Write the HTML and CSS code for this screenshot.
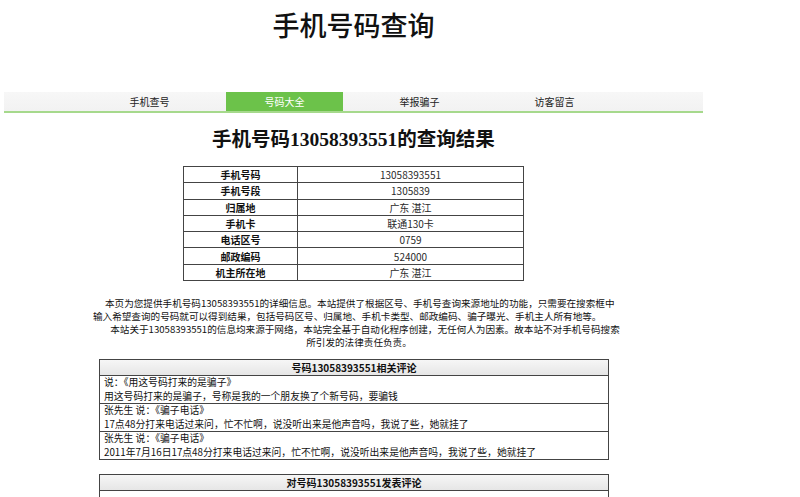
FILE: index.html
```html
<!DOCTYPE html>
<html lang="zh-CN">
<head>
<meta charset="utf-8">
<title>手机号码查询</title>
<link rel="stylesheet" href="styles.css">
</head>
<body>
<div class="page">
  <header class="site-head">
    <h1 class="site-title">手机号码查询</h1>
  </header>
  <nav class="nav">
    <a class="nav-item">手机查号</a>
    <a class="nav-item active">号码大全</a>
    <a class="nav-item">举报骗子</a>
    <a class="nav-item">访客留言</a>
  </nav>
  <h2 class="result-title">手机号码13058393551的查询结果</h2>
  <table class="info">
    <tr><th>手机号码</th><td>13058393551</td></tr>
    <tr><th>手机号段</th><td>1305839</td></tr>
    <tr><th>归属地</th><td>广东 湛江</td></tr>
    <tr><th>手机卡</th><td>联通130卡</td></tr>
    <tr><th>电话区号</th><td>0759</td></tr>
    <tr><th>邮政编码</th><td>524000</td></tr>
    <tr><th>机主所在地</th><td>广东 湛江</td></tr>
  </table>
  <div class="desc">
    <p class="desc-p1">本页为您提供手机号码13058393551的详细信息。本站提供了根据区号、手机号查询来源地址的功能，只需要在搜索框中<br>输入希望查询的号码就可以得到结果，包括号码区号、归属地、手机卡类型、邮政编码、骗子曝光、手机主人所有地等。</p>
    <p class="desc-p2">本站关于13058393551的信息均来源于网络，本站完全基于自动化程序创建，无任何人为因素。故本站不对手机号码搜索<br>所引发的法律责任负责。</p>
  </div>
  <div class="box">
    <div class="box-head">号码13058393551相关评论</div>
    <div class="comment">说：《用这号码打来的是骗子》<br>用这号码打来的是骗子，号称是我的一个朋友换了个新号码，要骗钱</div>
    <div class="comment">张先生 说：《骗子电话》<br>17点48分打来电话过来问，忙不忙啊，说没听出来是他声音吗，我说了些，她就挂了</div>
    <div class="comment">张先生 说：《骗子电话》<br>2011年7月16日17点48分打来电话过来问，忙不忙啊，说没听出来是他声音吗，我说了些，她就挂了</div>
  </div>
  <div class="box box2">
    <div class="box-head">对号码13058393551发表评论</div>
    <div class="comment empty"></div>
  </div>
</div>
</body>
</html>
```
FILE: styles.css
```css
html, body {
  margin: 0;
  padding: 0;
  background: #fff;
}
body {
  font-family: "Noto Sans CJK SC", "Liberation Sans", sans-serif;
  font-size: 10px;
  color: #111;
}
.page {
  width: 699px;
  margin-left: 4px;
}
.site-head {
  height: 92px;
}
.site-title {
  margin: 0;
  padding-top: 9px;
  text-align: center;
  font-size: 27px;
  line-height: 32px;
  font-weight: 500;
  color: #111;
}
.nav {
  display: flex;
  gap: 18px;
  padding-left: 87px;
  height: 19px;
  background: linear-gradient(#f7f7f7, #f2f2f2);
  border-bottom: 2px solid #a6d98c;
}
.nav-item {
  width: 117px;
  text-align: center;
  line-height: 19px;
  font-size: 10px;
  color: #222;
}
.nav-item.active {
  background: #6cc24a;
  color: #fff;
}
.result-title {
  margin: 14px 0 0;
  text-align: center;
  font-family: "Liberation Serif", "Noto Sans CJK SC", serif;
  font-size: 19.5px;
  line-height: 26px;
  font-weight: bold;
}
.info {
  margin: 13px auto 0;
  width: 341px;
  border-collapse: collapse;
  border: 1px solid #333;
}
.info th, .info td {
  border: 1px solid #444;
  height: 15.3px;
  padding: 0;
  line-height: 15px;
  text-align: center;
  font-size: 10px;
}
.info th {
  width: 113px;
  font-weight: bold;
  color: #111;
}
.info td {
  color: #2a2a2a;
  font-weight: normal;
}
.desc {
  margin: 16px 0 0 89px;
  width: 532px;
  line-height: 13px;
  font-size: 9.6px;
  color: #111;
}
.desc p {
  margin: 0;
  text-indent: 1.25em;
  white-space: nowrap;
}
.desc-p2 {
  text-align: center;
}
.box {
  margin: 10px 0 0 95px;
  width: 508px;
  border: 1px solid #444;
}
.box2 {
  margin-top: 14px;
}
.box-head {
  height: 15px;
  line-height: 15px;
  text-align: center;
  font-weight: bold;
  background: linear-gradient(#f6f6f6, #e6e6e6);
  border-bottom: 1px solid #444;
}
.comment {
  padding: 0 4px;
  font-size: 9.8px;
  line-height: 13.5px;
  border-bottom: 1px solid #444;
}
.comment:last-child {
  border-bottom: 0;
}
.comment.empty {
  height: 20px;
}
```
